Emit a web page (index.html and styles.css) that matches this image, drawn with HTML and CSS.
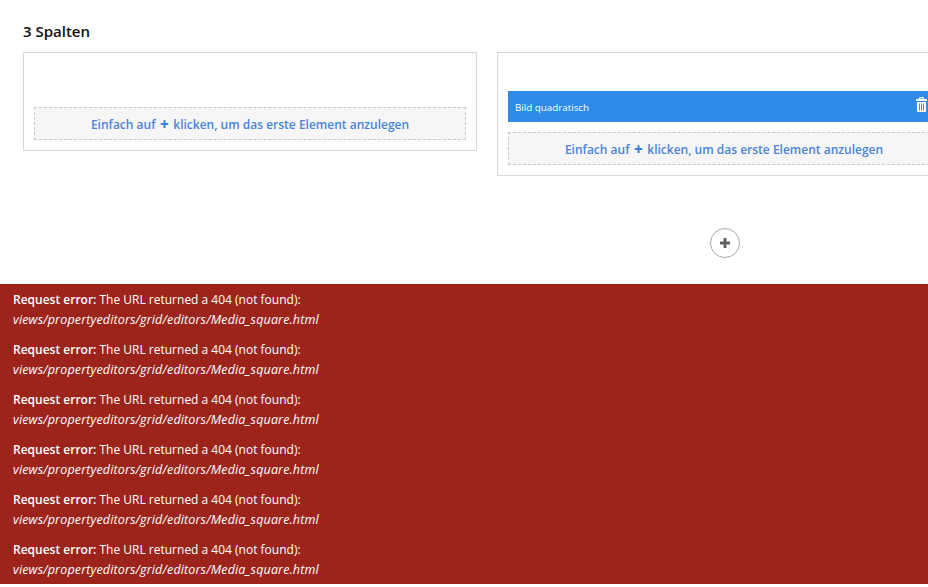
FILE: index.html
```html
<!DOCTYPE html>
<html lang="de">
<head>
<meta charset="utf-8">
<title>3 Spalten</title>
<link rel="stylesheet" href="styles.css">
</head>
<body>
<main class="grid-area">
  <h2 class="section-title">3 Spalten</h2>
  <div class="columns">
    <section class="col col-left">
      <div class="add-hint">Einfach auf <span class="plus">+</span> klicken, um das erste Element anzulegen</div>
    </section>
    <div class="col-right-wrap">
      <section class="col col-right">
        <div class="control-bar">
          <span class="control-name">Bild quadratisch</span>
          <svg class="trash" viewBox="0 0 12 15" width="11" height="15" preserveAspectRatio="none"><path fill="#fff" fill-rule="evenodd" d="M4 0h4l1 2h3v2H0V2h3zM5 1v1h2V1zM1 5h10v8.500a1.500 1.500 0 0 1-1.500 1.500h-7A1.500 1.500 0 0 1 1 13.500zm2.300 1.500v7h1v-7zm2.200 0v7h1v-7zm2.200 0v7h1v-7z"/></svg>
        </div>
        <div class="add-hint">Einfach auf <span class="plus">+</span> klicken, um das erste Element anzulegen</div>
      </section>
      <button class="add-row" aria-label="Hinzufügen"><svg viewBox="0 0 12 12" width="12" height="12"><path d="M6 1v10M1 6h10" stroke="#5f5f5f" stroke-width="2.800" fill="none"/></svg></button>
    </div>
  </div>
</main>
<section class="errors">
  <p class="err"><b>Request error:</b> The URL returned a 404 (not found):<br><i>views/propertyeditors/grid/editors/Media_square.html</i></p>
  <p class="err"><b>Request error:</b> The URL returned a 404 (not found):<br><i>views/propertyeditors/grid/editors/Media_square.html</i></p>
  <p class="err"><b>Request error:</b> The URL returned a 404 (not found):<br><i>views/propertyeditors/grid/editors/Media_square.html</i></p>
  <p class="err"><b>Request error:</b> The URL returned a 404 (not found):<br><i>views/propertyeditors/grid/editors/Media_square.html</i></p>
  <p class="err"><b>Request error:</b> The URL returned a 404 (not found):<br><i>views/propertyeditors/grid/editors/Media_square.html</i></p>
  <p class="err"><b>Request error:</b> The URL returned a 404 (not found):<br><i>views/propertyeditors/grid/editors/Media_square.html</i></p>
</section>
</body>
</html>
```
FILE: styles.css
```css
html, body { margin: 0; padding: 0; }
body { width: 928px; height: 587px; overflow: hidden; background: #fff; font-family: "Open Sans", sans-serif; color: #111; }
.grid-area { height: 284px; padding: 21px 0 0 23px; box-sizing: border-box; overflow: hidden; }
.section-title { margin: 0 0 11px; font-size: 15px; line-height: 20px; font-weight: 600; color: #111; }
.columns { display: flex; align-items: flex-start; gap: 20px; }
.col { background: #fff; border: 1px solid #d8d8d8; box-sizing: border-box; }
.col-left { flex: none; width: 454px; padding: 54px 10px 10px; }
.col-right-wrap { width: 454px; flex: none; display: flex; flex-direction: column; align-items: center; }
.col-right { width: 100%; padding: 38px 10px 10px; }
.control-bar { height: 31px; background: #2f8ae8; display: flex; align-items: center; justify-content: space-between; padding: 0 13px 0 7px; margin-bottom: 10px; color: #fff; }
.control-name { font-size: 9.800px; font-weight: 400; padding-top: 2px; }
.trash { margin-top: -4px; }
.add-hint { height: 33px; padding-top: 2px; box-sizing: border-box; border: 1px dashed #c8c8c8; background: #f6f6f6; color: #4a84d6; font-size: 12px; font-weight: 600; display: flex; align-items: center; justify-content: center; gap: 4.500px; }
.plus { font-weight: 800; font-size: 15px; line-height: 1; color: #3b7fe0; }
.add-row { margin: 52px 0 0 2px; width: 30px; height: 30px; border-radius: 50%; background: #fff; border: 1px solid #aaa; padding: 0; display: flex; align-items: center; justify-content: center; }
.errors { background: #9c241b; color: #fff; height: 300px; padding: 6px 13px 0; box-sizing: border-box; font-size: 12px; line-height: 20px; }
.err { margin: 0 0 10px; }
.err b { font-weight: 600; }
.err i { font-size: 12.500px; letter-spacing: .15px; }
```
